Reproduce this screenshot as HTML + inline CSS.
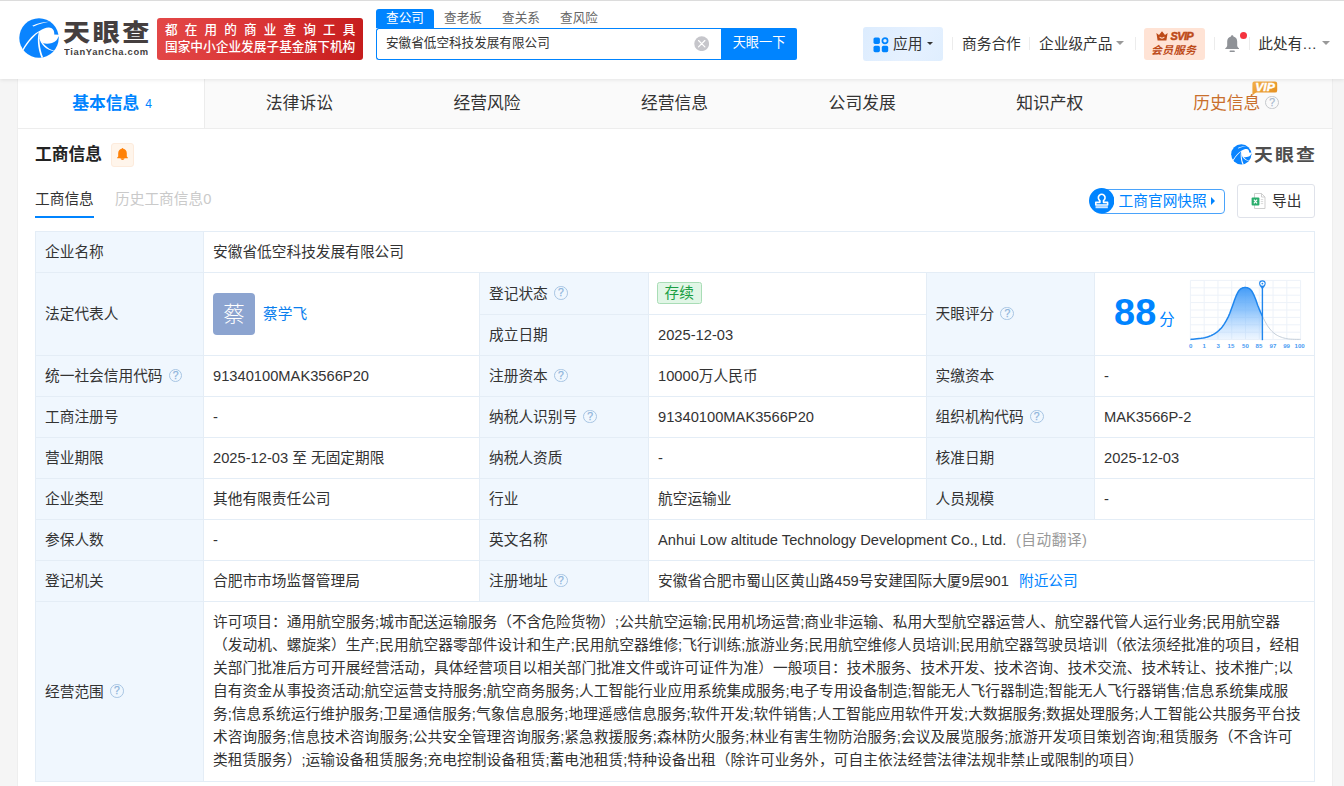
<!DOCTYPE html>
<html lang="zh-CN">
<head>
<meta charset="utf-8">
<title>安徽省低空科技发展有限公司 - 天眼查</title>
<style>
*{box-sizing:border-box;margin:0;padding:0}
html,body{width:1344px;height:786px;overflow:hidden}
body{background:#f5f5f5;font-family:"Liberation Sans","Noto Sans CJK SC",sans-serif;font-size:14.7px;color:#333;position:relative}
a{text-decoration:none;color:inherit}
.abs{position:absolute;white-space:nowrap}
/* ---------- header ---------- */
#hd{position:absolute;left:0;top:0;width:1344px;height:78.7px;background:#fff;box-shadow:0 1px 4px rgba(0,0,0,.09);z-index:5}
#hd:before{content:"";position:absolute;left:0;top:0;width:100%;height:1px;background:#dcdcdc}
#logo-ico{position:absolute;left:18.5px;top:18.2px;width:40px;height:40px}
#logo-cn{left:63.2px;top:14.6px;font-size:23.4px;font-weight:900;color:#453f3f;letter-spacing:2.1px;line-height:36px;transform-origin:0 50%;transform:scaleX(1.16)}
#logo-en{left:63.6px;top:45.6px;font-size:8.4px;font-weight:700;color:#453f3f;letter-spacing:.6px;line-height:12px;transform-origin:0 50%;transform:scaleX(1.12)}
#banner{position:absolute;left:157px;top:18px;width:206px;height:42px;border-radius:3px;background:linear-gradient(100deg,#e34848 0%,#d93232 55%,#c51c1c 100%);color:#fff;font-weight:500}
#banner .l1{left:8px;top:3px;font-size:12.6px;line-height:18px;letter-spacing:7.15px}
#banner .l2{left:8px;top:20px;font-size:12.7px;line-height:18px;letter-spacing:0}
.stab{top:9px;height:19px;line-height:18px;font-size:12.6px;color:#666;text-align:center;width:58px}
.stab.on{background:#0084ff;color:#fff;border-radius:3px 3px 0 0}
#sbox{position:absolute;left:376px;top:28px;width:345px;height:32px;border:1px solid #0084ff;border-right:none;border-radius:3px 0 0 3px;background:#fff}
#sbox span{left:9px;top:0;line-height:29px;font-size:12.6px;color:#333}
#sclear{position:absolute;left:317px;top:7px;width:15.4px;height:15.4px}
#sbtn{position:absolute;left:721px;top:28px;width:76px;height:32px;background:#0084ff;border-radius:0 2px 2px 0;color:#fff;font-size:13.2px;line-height:30px;text-align:center}
.nav{top:33.7px;line-height:21px;font-size:14.7px;color:#333}
.sep{position:absolute;top:37px;width:1px;height:13px;background:#ececec}
.caret{position:absolute;width:0;height:0;border-left:4px solid transparent;border-right:4px solid transparent;border-top:4.5px solid #999}
#app{position:absolute;left:863px;top:27px;width:80px;height:34px;border-radius:3px;background:linear-gradient(120deg,#dcecfe,#e6f1ff 60%,#dfeefe)}
#svip{position:absolute;left:1144px;top:28px;width:61px;height:32px;border-radius:3px;background:#ffe3d5;color:#bd4a18;font-weight:700;font-style:italic;text-align:center}
/* ---------- main ---------- */
#main{position:absolute;left:18px;top:79px;width:1314px;height:720px;background:#fff;box-shadow:0 0 0 1px #eeeeee}
#tabs{position:absolute;left:0;top:0;width:1314px;height:50px;background:#fafafa;border-bottom:1px solid #ededed}
.tab{position:absolute;top:0;height:49px;line-height:50px;width:187.6px;text-align:center;font-size:16.8px;color:#333}
.tab.on{background:#fff;color:#0084ff;font-weight:700;border-right:1px solid #ececec;height:49px;padding-left:3px}
.tab .n{display:inline-block;font-size:13.4px;font-weight:400;position:relative;top:-1.4px;margin-left:5.5px;font-family:"Liberation Sans",sans-serif;transform:scaleX(.9)}
.q{display:inline-block;width:13.7px;height:13.7px;border:1.4px solid #a7c5e3;border-radius:50%;color:#8fb4db;font-size:10.4px;line-height:11px;text-align:center;vertical-align:middle;position:relative;top:-1.6px;margin-left:6.2px;font-family:"Liberation Sans",sans-serif;font-weight:400;letter-spacing:0;-webkit-text-stroke:.25px #8fb4db}

/* ---------- section ---------- */
#h2{left:17px;top:64px;font-size:16.8px;font-weight:700;color:#222;line-height:24px}
#bell{position:absolute;left:93px;top:64px;width:23px;height:24px;border:1px solid #fdebdc;background:#fff5eb;border-radius:3px}
#wm{position:absolute;left:1212px;top:65px;width:86px;height:22px}
.sub{top:109px;line-height:22px;font-size:14.7px}
#uline{position:absolute;left:17px;top:136.6px;width:59px;height:2.4px;background:#0084ff}
#snap{position:absolute;left:1072px;top:110px;width:135px;height:25px;border:1px solid #4aa3fb;border-radius:12px 4px 4px 12px;color:#0084ff}
#exp{position:absolute;left:1219px;top:105px;width:78px;height:34px;border:1px solid #dfe2ea;border-radius:3px;background:#fff}
/* ---------- table ---------- */
#tb{position:absolute;left:17px;top:152px;width:1279px;border-collapse:collapse;table-layout:fixed;font-size:14.7px;color:#333}
#tb td{border:1px solid #e4edf6;padding:0 9px;height:41px;line-height:22px;vertical-align:middle;white-space:nowrap;overflow:hidden}
#tb td.l{background:#f0f7fe}
#tb td.h{height:42px}
#tb td.h2{height:41px}
.tag{display:inline-block;height:22.4px;line-height:20.4px;padding:0 6.6px;border:1px solid #a9ddb6;background:#e1f6e6;color:#1b9e43;font-size:14.7px;border-radius:2.5px;vertical-align:middle;position:relative;left:-1px;top:-1.2px}
.lnk{color:#0084ff}
#scope{white-space:normal !important;line-height:23.1px !important;padding:8.6px 11.5px 8.6px 9px !important;height:180px !important;letter-spacing:.05px}
</style>
</head>
<body>
<div id="hd">
  <svg id="logo-ico" viewBox="0 0 40 40">
    <circle cx="20" cy="20" r="19.7" fill="#0a84ff"/>
    <path d="M20.96 12.85 C23.5 10.8 27 9.5 30 9.6 C33.5 9.8 35.7 12.6 35.2 16.6 L40.5 16.9 L40.5 18.5 L39.3 18.6 C39 21 37 23.8 33 25 C29.5 26 26 25.8 23.9 25.1 C22 23.5 20.8 21.5 20.5 19.5 C20 17 20.2 14.5 20.96 12.85 Z" fill="#fff"/>
    <path d="M21.4 12.4 C15 15 8.5 22.5 3.6 31.2 L4.6 32.2 C9.6 24 15.2 17.4 21.2 13.6 Z" fill="#fff"/>
    <path d="M20.2 13 C18 19 18.4 30 22.4 39.8 L24.2 39.4 C20.6 30.5 19.6 21 21.2 13.4 Z" fill="#fff"/>
    <path d="M20.2 19.5 C21.6 26.5 27 32 35 33.2 L34.6 32.5 C28.5 30.6 23.6 26 21.6 20.2 Z" fill="#fff"/>
    <path d="M13.2 7.7 C19 5 25 4 30.4 3.8 C25 4.7 20 5.8 14.6 8.4 Z" fill="#fff"/>
  </svg>
  <div class="abs" id="logo-cn">天眼查</div>
  <div class="abs" id="logo-en">TianYanCha.com</div>
  <div id="banner"><div class="abs l1">都在用的商业查询工具</div><div class="abs l2">国家中小企业发展子基金旗下机构</div></div>

  <div class="abs stab on" style="left:376px">查公司</div>
  <div class="abs stab" style="left:434px">查老板</div>
  <div class="abs stab" style="left:492px">查关系</div>
  <div class="abs stab" style="left:550px">查风险</div>
  <div id="sbox"><span class="abs">安徽省低空科技发展有限公司</span>
    <svg id="sclear" viewBox="0 0 16 16"><circle cx="8" cy="8" r="7.7" fill="#c6c6cb"/><path d="M4.7 4.7 L11.3 11.3 M11.3 4.7 L4.7 11.3" stroke="#fff" stroke-width="1.25" stroke-linecap="round"/></svg>
  </div>
  <div id="sbtn">天眼一下</div>

  <div id="app">
    <svg style="position:absolute;left:10px;top:10px" width="16" height="16" viewBox="0 0 16 16"><rect x="0.5" y="0.5" width="6.4" height="6.4" rx="1.6" fill="#0084ff"/><circle cx="12" cy="3.8" r="2.6" fill="none" stroke="#0084ff" stroke-width="1.7"/><rect x="0.5" y="8.8" width="6.4" height="6.4" rx="1.6" fill="#0084ff"/><rect x="8.8" y="8.8" width="6.4" height="6.4" rx="1.6" fill="#0084ff"/></svg>
    <div class="abs" style="left:30px;top:6.7px;line-height:21px;font-size:14.7px;color:#333">应用</div>
    <div class="caret" style="left:63.5px;top:15.4px;border-top-color:#333;border-left-width:3.8px;border-right-width:3.8px;border-top-width:3.8px"></div>
  </div>
  <div class="sep" style="left:952px"></div>
  <div class="abs nav" style="left:962px">商务合作</div>
  <div class="sep" style="left:1029px"></div>
  <div class="abs nav" style="left:1039px">企业级产品</div>
  <div class="caret" style="left:1116px;top:41px"></div>
  <div class="sep" style="left:1135px"></div>
  <div id="svip">
    <div class="abs" style="left:0;width:61px;top:2.4px;font-size:11px;line-height:13px;letter-spacing:-.6px;-webkit-text-stroke:.5px #bd4a18"><svg width="12" height="10" viewBox="0 0 12 10" style="vertical-align:-1px;margin-right:2.5px"><path d="M0.4 2 L3 4 L6 0.3 L9 4 L11.6 2 L10.4 9.6 L1.6 9.6 Z" fill="#bd4a18"/><path d="M4 6.3 C4.6 7.4 7.4 7.4 8 6.3" stroke="#ffe3d5" stroke-width="1.1" fill="none" stroke-linecap="round"/></svg>SVIP</div>
    <div class="abs" style="left:-.8px;width:61px;top:14.8px;font-size:10.9px;line-height:15px;letter-spacing:.45px">会员服务</div>
  </div>
  <div class="sep" style="left:1214px"></div>
  <svg style="position:absolute;left:1224.6px;top:35.4px" width="14.4" height="17.6" viewBox="0 0 14.4 17.6"><path d="M7.2 0.3 C7.9 0.3 8.4 0.8 8.4 1.5 C10.9 2.1 12.2 4.1 12.2 6.6 V10.4 C12.2 11.6 13 12.4 14.2 13.4 V14.1 H0.2 V13.4 C1.4 12.4 2.2 11.6 2.2 10.4 V6.6 C2.2 4.1 3.5 2.1 6 1.5 C6 0.8 6.5 0.3 7.2 0.3 Z" fill="#8f9297"/><rect x="4.6" y="15.6" width="5.2" height="1.5" rx=".7" fill="#8f9297"/></svg>
  <div style="position:absolute;left:1240px;top:31.5px;width:7.2px;height:7.2px;border-radius:50%;background:#f5333f"></div>
  <div class="sep" style="left:1249px"></div>
  <div class="abs nav" style="left:1258.3px">此处有…</div>
  <div class="caret" style="left:1322px;top:41px"></div>
</div>

<div id="main">
  <div id="tabs">
    <div class="tab on" style="left:0;width:186.5px">基本信息<span class="n">4</span></div>
    <div class="tab" style="left:187.6px">法律诉讼</div>
    <div class="tab" style="left:375.2px">经营风险</div>
    <div class="tab" style="left:562.8px">经营信息</div>
    <div class="tab" style="left:750.4px">公司发展</div>
    <div class="tab" style="left:938px">知识产权</div>
    <div class="tab" style="left:1125.6px;color:#c96f2c;text-align:left;padding-left:49.6px">历史信息<span class="q" style="border-color:#c5c8cc;color:#b9bcc1;margin-left:5px;top:-2px">?</span><svg style="position:absolute;left:108px;top:1.6px" width="26" height="16" viewBox="0 0 26 16"><defs><linearGradient id="vg" x1="0" y1="0" x2="1" y2="1"><stop offset="0" stop-color="#f3b04a"/><stop offset="1" stop-color="#e48d1c"/></linearGradient></defs><path d="M2.4 0.4 H23 A2.2 2.2 0 0 1 25.2 2.6 V9.4 A2.2 2.2 0 0 1 23 11.6 H4.6 C3 12.2 1.4 13.4 0.4 15 V2.4 A2 2 0 0 1 2.4 0.4 Z" fill="url(#vg)"/><text x="3.2" y="9.8" font-size="10.2" font-weight="700" font-style="italic" fill="#fff" stroke="#fff" stroke-width=".35" textLength="19.6" lengthAdjust="spacingAndGlyphs" font-family="Liberation Sans, sans-serif">VIP</text></svg></div>
  </div>

  <div class="abs" id="h2">工商信息</div>
  <div id="bell"><svg width="21" height="22" viewBox="0 0 21 22"><path d="M10.5 4.1 C10.9 4.1 11.2 4.4 11.3 4.8 C13.4 5.3 14.8 7 14.8 9.2 V12.4 L15.8 13.5 V14.3 H5.2 V13.5 L6.2 12.4 V9.2 C6.2 7 7.6 5.3 9.7 4.8 C9.8 4.4 10.1 4.1 10.5 4.1 Z" fill="#ff8208"/><path d="M8.5 14.3 H12.5 C12.3 15.3 11.5 16 10.5 16 C9.5 16 8.7 15.3 8.5 14.3 Z" fill="#ff8208"/></svg></div>
  <div id="wm">
    <svg style="position:absolute;left:1px;top:0.4px" width="20.6" height="20.6" viewBox="0 0 40 40"><circle cx="20" cy="20" r="19.7" fill="#0a84ff"/><path d="M20.96 12.85 C23.5 10.8 27 9.5 30 9.6 C33.5 9.8 35.7 12.6 35.2 16.6 L40.5 16.9 L40.5 18.5 L39.3 18.6 C39 21 37 23.8 33 25 C29.5 26 26 25.8 23.9 25.1 C22 23.5 20.8 21.5 20.5 19.5 C20 17 20.2 14.5 20.96 12.85 Z" fill="#fff"/><path d="M21.4 12.4 C15 15 8.5 22.5 3.6 31.2 L4.8 32.4 C9.6 24 15.2 17.6 21.2 13.8 Z" fill="#fff"/><path d="M20.2 13 C18 19 18.4 30 22.4 39.8 L24.6 39.4 C20.8 30.5 19.8 21 21.4 13.4 Z" fill="#fff"/><path d="M20.2 19.5 C21.6 26.5 27 32 35 33.4 L34.6 32.3 C28.5 30.4 23.8 26 21.8 20.2 Z" fill="#fff"/><path d="M13.2 7.7 C19 5 25 4 30.4 3.8 C25 4.9 20 6 14.6 8.6 Z" fill="#fff"/></svg>
    <div class="abs" style="left:24.2px;top:-.7px;font-size:17.2px;font-weight:700;color:#4e4e4e;line-height:24px;letter-spacing:1.9px;transform-origin:0 50%;transform:scaleX(1.1)">天眼查</div>
  </div>
  <div class="abs sub" style="left:17px;color:#333">工商信息</div>
  <div class="abs sub" style="left:97px;color:#cacaca">历史工商信息0</div>
  <div id="uline"></div>
  <div id="snap">
    <svg style="position:absolute;left:-2px;top:-1.6px" width="25.4" height="25.4" viewBox="0 0 24 24"><circle cx="12" cy="12" r="12" fill="#0084ff"/><path d="M10.3 11.9 C8.6 10.9 8.3 8.4 9.7 7 C11 5.8 13 5.8 14.3 7 C15.7 8.4 15.4 10.9 13.7 11.9 V13.6 H17.6 V16 H6.4 V13.6 H10.3 Z" fill="none" stroke="#fff" stroke-width="1.5" stroke-linejoin="round"/><rect x="6.2" y="17.2" width="11.6" height="1.9" fill="#cfe6ff"/></svg>
    <div class="abs" style="left:27.6px;top:.6px;line-height:21px;font-size:14.7px">工商官网快照</div>
    <div style="position:absolute;left:119.6px;top:7.2px;width:0;height:0;border-top:4.1px solid transparent;border-bottom:4.1px solid transparent;border-left:4.6px solid #0084ff"></div>
  </div>
  <div id="exp">
    <svg style="position:absolute;left:13.4px;top:8.4px" width="15" height="16" viewBox="0 0 15 16"><path d="M3.5 0.5 H10.5 L14 4 V15.5 H3.5 Z" fill="#fff" stroke="#c9c9c9" stroke-width="0.9"/><path d="M10.5 0.5 V4 H14" fill="none" stroke="#c9c9c9" stroke-width="0.9"/><path d="M9.8 6.6 H12.2 M9.8 8.6 H12.2 M9.8 10.6 H12.2" stroke="#cfcfcf" stroke-width="0.8"/><rect x="0.6" y="4.6" width="7.8" height="7.8" rx="1" fill="#2aad6c"/><path d="M2.9 6.7 L6.1 10.3 M6.1 6.7 L2.9 10.3" stroke="#fff" stroke-width="1.2"/></svg>
    <div class="abs" style="left:34px;top:5px;line-height:22px;font-size:14.7px;color:#333">导出</div>
  </div>

  <table id="tb">
    <colgroup><col style="width:168px"><col style="width:276px"><col style="width:169px"><col style="width:277.5px"><col style="width:168.5px"><col style="width:220px"></colgroup>
    <tr><td class="l">企业名称</td><td colspan="5">安徽省低空科技发展有限公司</td></tr>
    <tr><td class="l" rowspan="2">法定代表人</td><td rowspan="2"><span style="display:inline-block;width:42px;height:42px;border-radius:4px;background:#8ca4d0;color:#fff;font-size:21.5px;line-height:44.5px;text-align:center;vertical-align:middle;font-weight:300;overflow:hidden">蔡</span><span class="lnk" style="margin-left:8px;vertical-align:middle;color:#0a7fee">蔡学飞</span></td><td class="l h">登记状态<span class="q">?</span></td><td class="h"><span class="tag">存续</span></td><td class="l" rowspan="2">天眼评分<span class="q">?</span></td><td rowspan="2" id="score" style="position:relative;padding:0"><!--SCORE--><svg style="position:absolute;left:0;top:0" width="219" height="82" viewBox="0 0 219 82"><defs><linearGradient id="bg" x1="0" y1="0" x2="0" y2="1"><stop offset="0" stop-color="#3a97f7" stop-opacity=".95"/><stop offset=".45" stop-color="#6db3fb" stop-opacity=".75"/><stop offset="1" stop-color="#9fcdff" stop-opacity=".18"/></linearGradient></defs><path d="M95.4 7.4 V66.6" stroke="#edf2f9" stroke-width="1"/><path d="M109.18 7.4 V66.6" stroke="#edf2f9" stroke-width="1"/><path d="M122.95 7.4 V66.6" stroke="#edf2f9" stroke-width="1"/><path d="M136.72 7.4 V66.6" stroke="#edf2f9" stroke-width="1"/><path d="M150.5 7.4 V66.6" stroke="#edf2f9" stroke-width="1"/><path d="M164.28 7.4 V66.6" stroke="#edf2f9" stroke-width="1"/><path d="M178.05 7.4 V66.6" stroke="#edf2f9" stroke-width="1"/><path d="M191.82 7.4 V66.6" stroke="#edf2f9" stroke-width="1"/><path d="M205.6 7.4 V66.6" stroke="#edf2f9" stroke-width="1"/><path d="M95.4 7.4 H205.6" stroke="#edf2f9" stroke-width="1"/><path d="M95.4 14.8 H205.6" stroke="#edf2f9" stroke-width="1"/><path d="M95.4 22.2 H205.6" stroke="#edf2f9" stroke-width="1"/><path d="M95.4 29.6 H205.6" stroke="#edf2f9" stroke-width="1"/><path d="M95.4 37.0 H205.6" stroke="#edf2f9" stroke-width="1"/><path d="M95.4 44.4 H205.6" stroke="#edf2f9" stroke-width="1"/><path d="M95.4 51.8 H205.6" stroke="#edf2f9" stroke-width="1"/><path d="M95.4 59.2 H205.6" stroke="#edf2f9" stroke-width="1"/><path d="M95.4 66.6 H205.6" stroke="#edf2f9" stroke-width="1"/><path d="M95.4 66.4 L96.53 66.28 L98.05 66.15 L99.88 65.98 L101.89 65.79 L103.97 65.57 L106.03 65.32 L107.94 65.03 L109.6 64.7 L111.05 64.34 L112.41 63.95 L113.69 63.53 L114.9 63.07 L116.06 62.58 L117.19 62.04 L118.3 61.45 L119.4 60.8 L120.48 60.1 L121.54 59.35 L122.55 58.56 L123.54 57.72 L124.5 56.83 L125.43 55.9 L126.33 54.92 L127.2 53.9 L128.04 52.81 L128.86 51.65 L129.64 50.44 L130.39 49.18 L131.12 47.9 L131.81 46.62 L132.47 45.34 L133.1 44.1 L133.68 42.88 L134.22 41.67 L134.71 40.47 L135.17 39.26 L135.63 38.05 L136.07 36.82 L136.53 35.57 L137.0 34.3 L137.49 32.97 L137.97 31.58 L138.46 30.15 L138.95 28.71 L139.44 27.3 L139.93 25.94 L140.41 24.67 L140.9 23.5 L141.38 22.43 L141.84 21.41 L142.3 20.45 L142.76 19.56 L143.23 18.74 L143.72 17.98 L144.24 17.3 L144.8 16.7 L145.4 16.17 L146.04 15.72 L146.72 15.34 L147.41 15.04 L148.11 14.8 L148.81 14.63 L149.51 14.53 L150.2 14.5 L150.89 14.53 L151.59 14.63 L152.29 14.8 L152.99 15.04 L153.68 15.34 L154.36 15.72 L155.0 16.17 L155.6 16.7 L156.16 17.3 L156.68 17.98 L157.17 18.74 L157.64 19.56 L158.1 20.45 L158.55 21.41 L159.02 22.43 L159.5 23.5 L160.0 24.67 L160.5 25.97 L161.0 27.34 L161.5 28.77 L162.0 30.22 L162.5 31.65 L163.0 33.02 L163.5 34.3 L163.98 35.48 L164.44 36.59 L164.88 37.66 L165.33 38.7 L165.8 39.74 L166.29 40.81 L166.82 41.92 L167.4 43.1 L167.4 66.6 L95.4 66.6 Z" fill="url(#bg)"/><path d="M167.4 43.1 L168.03 44.37 L168.69 45.73 L169.38 47.14 L170.11 48.56 L170.86 49.98 L171.64 51.36 L172.46 52.68 L173.3 53.9 L174.16 55.04 L175.05 56.15 L175.95 57.21 L176.89 58.22 L177.87 59.19 L178.89 60.09 L179.97 60.93 L181.1 61.7 L182.29 62.4 L183.52 63.04 L184.8 63.62 L186.13 64.14 L187.51 64.61 L188.93 65.02 L190.39 65.38 L191.9 65.7 L193.57 65.95 L195.44 66.12 L197.43 66.23 L199.43 66.3 L201.34 66.33 L203.07 66.35 L204.52 66.37 L205.6 66.4" fill="none" stroke="#c5cfda" stroke-width="1"/><path d="M95.4 66.4 L96.53 66.28 L98.05 66.15 L99.88 65.98 L101.89 65.79 L103.97 65.57 L106.03 65.32 L107.94 65.03 L109.6 64.7 L111.05 64.34 L112.41 63.95 L113.69 63.53 L114.9 63.07 L116.06 62.58 L117.19 62.04 L118.3 61.45 L119.4 60.8 L120.48 60.1 L121.54 59.35 L122.55 58.56 L123.54 57.72 L124.5 56.83 L125.43 55.9 L126.33 54.92 L127.2 53.9 L128.04 52.81 L128.86 51.65 L129.64 50.44 L130.39 49.18 L131.12 47.9 L131.81 46.62 L132.47 45.34 L133.1 44.1 L133.68 42.88 L134.22 41.67 L134.71 40.47 L135.17 39.26 L135.63 38.05 L136.07 36.82 L136.53 35.57 L137.0 34.3 L137.49 32.97 L137.97 31.58 L138.46 30.15 L138.95 28.71 L139.44 27.3 L139.93 25.94 L140.41 24.67 L140.9 23.5 L141.38 22.43 L141.84 21.41 L142.3 20.45 L142.76 19.56 L143.23 18.74 L143.72 17.98 L144.24 17.3 L144.8 16.7 L145.4 16.17 L146.04 15.72 L146.72 15.34 L147.41 15.04 L148.11 14.8 L148.81 14.63 L149.51 14.53 L150.2 14.5 L150.89 14.53 L151.59 14.63 L152.29 14.8 L152.99 15.04 L153.68 15.34 L154.36 15.72 L155.0 16.17 L155.6 16.7 L156.16 17.3 L156.68 17.98 L157.17 18.74 L157.64 19.56 L158.1 20.45 L158.55 21.41 L159.02 22.43 L159.5 23.5 L160.0 24.67 L160.5 25.97 L161.0 27.34 L161.5 28.77 L162.0 30.22 L162.5 31.65 L163.0 33.02 L163.5 34.3 L163.98 35.48 L164.44 36.59 L164.88 37.66 L165.33 38.7 L165.8 39.74 L166.29 40.81 L166.82 41.92 L167.4 43.1" fill="none" stroke="#1f86ee" stroke-width="1.5" stroke-linejoin="round"/><path d="M167.4 15.0 V67.2" stroke="#1f86ee" stroke-width="1.4"/><path d="M164.1 10.6 A3.3 3.3 0 1 1 170.7 10.6 C170.7 13.0 168.4 14.6 167.4 16.6 C166.4 14.6 164.1 13.0 164.1 10.6 Z" fill="#1f86ee"/><circle cx="167.4" cy="10.6" r="2.2" fill="#fff"/><circle cx="167.4" cy="10.6" r="0.9" fill="#1f86ee"/><text x="95.6" y="74.9" font-size="6.1" font-weight="700" fill="#4a9cf3" text-anchor="middle" font-family="Liberation Sans, sans-serif">0</text><text x="109.3" y="74.9" font-size="6.1" font-weight="700" fill="#4a9cf3" text-anchor="middle" font-family="Liberation Sans, sans-serif">1</text><text x="123.3" y="74.9" font-size="6.1" font-weight="700" fill="#4a9cf3" text-anchor="middle" font-family="Liberation Sans, sans-serif">3</text><text x="136.0" y="74.9" font-size="6.1" font-weight="700" fill="#4a9cf3" text-anchor="middle" font-family="Liberation Sans, sans-serif">15</text><text x="150.5" y="74.9" font-size="6.1" font-weight="700" fill="#4a9cf3" text-anchor="middle" font-family="Liberation Sans, sans-serif">50</text><text x="163.9" y="74.9" font-size="6.1" font-weight="700" fill="#4a9cf3" text-anchor="middle" font-family="Liberation Sans, sans-serif">85</text><text x="177.9" y="74.9" font-size="6.1" font-weight="700" fill="#4a9cf3" text-anchor="middle" font-family="Liberation Sans, sans-serif">97</text><text x="191.6" y="74.9" font-size="6.1" font-weight="700" fill="#4a9cf3" text-anchor="middle" font-family="Liberation Sans, sans-serif">99</text><text x="204.6" y="74.9" font-size="6.1" font-weight="700" fill="#4a9cf3" text-anchor="middle" font-family="Liberation Sans, sans-serif">100</text></svg><div class="abs" style="left:19.0px;top:18.2px;font-size:37.8px;font-weight:700;color:#0084ff;line-height:42px;letter-spacing:.2px">88</div><div class="abs" style="left:64.3px;top:36.2px;font-size:15.4px;color:#0084ff;line-height:22px">分</div></td></tr>
    <tr><td class="l h2">成立日期</td><td class="h2">2025-12-03</td></tr>
    <tr><td class="l">统一社会信用代码<span class="q">?</span></td><td>91340100MAK3566P20</td><td class="l">注册资本<span class="q">?</span></td><td>10000万人民币</td><td class="l">实缴资本</td><td>-</td></tr>
    <tr><td class="l">工商注册号</td><td>-</td><td class="l">纳税人识别号<span class="q">?</span></td><td>91340100MAK3566P20</td><td class="l">组织机构代码<span class="q">?</span></td><td>MAK3566P-2</td></tr>
    <tr><td class="l">营业期限</td><td>2025-12-03 至 无固定期限</td><td class="l">纳税人资质</td><td>-</td><td class="l">核准日期</td><td>2025-12-03</td></tr>
    <tr><td class="l">企业类型</td><td>其他有限责任公司</td><td class="l">行业</td><td>航空运输业</td><td class="l">人员规模</td><td>-</td></tr>
    <tr><td class="l">参保人数</td><td>-</td><td class="l">英文名称</td><td colspan="3">Anhui Low altitude Technology Development Co., Ltd. <span style="color:#999;margin-left:5.5px;letter-spacing:.5px">(自动翻译)</span></td></tr>
    <tr><td class="l">登记机关</td><td>合肥市市场监督管理局</td><td class="l">注册地址<span class="q">?</span></td><td colspan="3">安徽省合肥市蜀山区黄山路459号安建国际大厦9层901<span class="lnk" style="margin-left:10px">附近公司</span></td></tr>
    <tr><td class="l">经营范围<span class="q">?</span></td><td colspan="5" id="scope">许可项目：通用航空服务;城市配送运输服务（不含危险货物）;公共航空运输;民用机场运营;商业非运输、私用大型航空器运营人、航空器代管人运行业务;民用航空器（发动机、螺旋桨）生产;民用航空器零部件设计和生产;民用航空器维修;飞行训练;旅游业务;民用航空维修人员培训;民用航空器驾驶员培训（依法须经批准的项目，经相关部门批准后方可开展经营活动，具体经营项目以相关部门批准文件或许可证件为准）一般项目：技术服务、技术开发、技术咨询、技术交流、技术转让、技术推广;以自有资金从事投资活动;航空运营支持服务;航空商务服务;人工智能行业应用系统集成服务;电子专用设备制造;智能无人飞行器制造;智能无人飞行器销售;信息系统集成服务;信息系统运行维护服务;卫星通信服务;气象信息服务;地理遥感信息服务;软件开发;软件销售;人工智能应用软件开发;大数据服务;数据处理服务;人工智能公共服务平台技术咨询服务;信息技术咨询服务;公共安全管理咨询服务;紧急救援服务;森林防火服务;林业有害生物防治服务;会议及展览服务;旅游开发项目策划咨询;租赁服务（不含许可类租赁服务）;运输设备租赁服务;充电控制设备租赁;蓄电池租赁;特种设备出租（除许可业务外，可自主依法经营法律法规非禁止或限制的项目）</td></tr>
  </table>

</div>
</body>
</html>
